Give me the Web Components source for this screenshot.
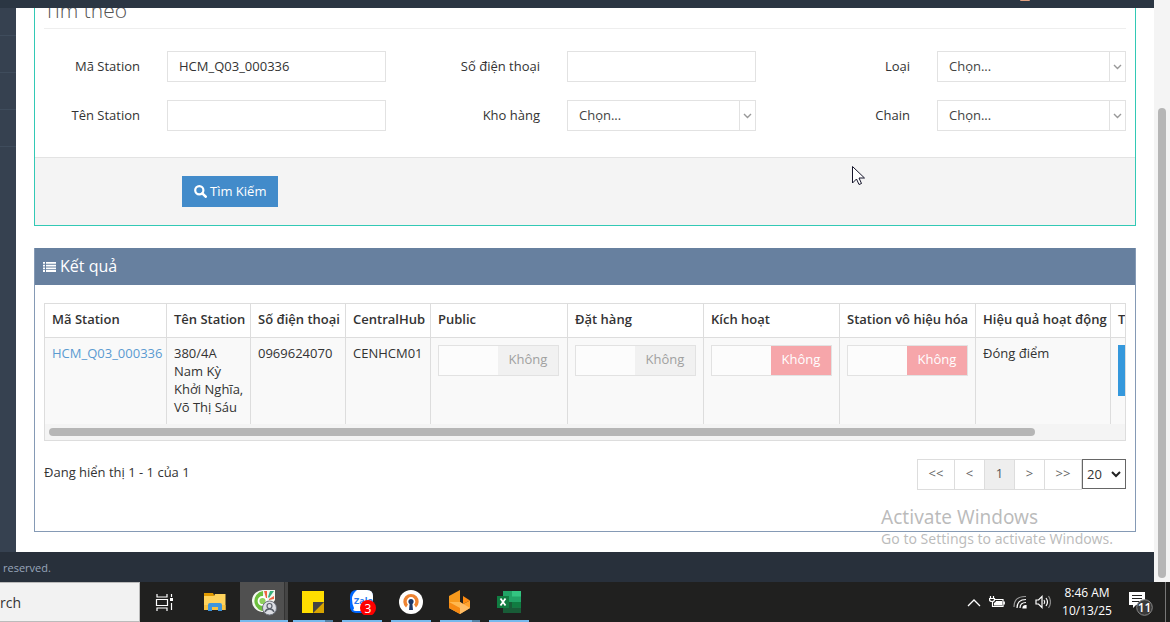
<!DOCTYPE html>
<html lang="vi">
<head>
<meta charset="utf-8">
<title>Station</title>
<style>
  html, body { height: 100%; }
  body {
    margin: 0;
    overflow: hidden;
    font: 13px/18px "Open Sans", "Noto Sans", sans-serif;
    color: #333;
  }
</style>
</head>
<body>
<station-app></station-app>

<script>
// Base: every element gives its markup and its styles
class BaseElement extends HTMLElement {

    constructor() {
        super();
        this.attachShadow({ mode: "open" });
    }

    connectedCallback() {
        if (this.shadowRoot.childNodes.length) return;
        let template = document.createElement("template");
        template.innerHTML = `
            <style>
            *, *::before, *::after { box-sizing: border-box; }
            button, input, select { font: inherit; color: inherit; border-radius: 0; margin: 0; }
            ${this.setStyles()}
            </style>
            ${this.getMarkup()}
        `;
        this.shadowRoot.appendChild(template.content.cloneNode(true));
    }
}

// Label + text box or drop-down, two cells of the filter grid
class FilterField extends BaseElement {

    getMarkup() {
        let label = this.getAttribute("label");
        let control = this.hasAttribute("options")
            ? `<div class="select">
                    <select id="control"><option>${this.getAttribute("options")}</option></select>
                    <span class="arrow"><svg width="9" height="6" viewBox="0 0 9 6"><path d="M1 1l3.5 3.5L8 1" fill="none" stroke="#999" stroke-width="1.4"/></svg></span>
                </div>`
            : `<input id="control" type="text" value="${this.getAttribute("value") || ""}">`;
        return `<label for="control">${label}</label>${control}`;
    }

    setStyles() {
        return `
        :host { display: contents; }
        label { text-align: right; padding: 6px 27px 0 0; }
        input, select {
            width: 100%;
            height: 31px;
            border: 1px solid #e2e2e2;
            background: #fff;
            padding: 0 11px 2px;
            outline: none;
        }
        select { appearance: none; color: #444; grid-area: 1 / 1 / 2 / 3; }
        .select { display: grid; grid-template-columns: 1fr 17px; }
        .arrow {
            grid-area: 1 / 2;
            display: flex;
            align-items: center;
            justify-content: center;
            padding-right: 1px;
            border-left: 1px solid #e2e2e2;
            pointer-events: none;
            z-index: 1;
        }`;
    }
}

class SearchPanel extends BaseElement {

    getMarkup() {
        return `
        <form onsubmit="return false">
            <div class="body">
                <div class="heading"><h3>Tìm theo</h3></div>
                <div class="fields"><slot></slot></div>
            </div>
            <div class="actions">
                <button type="submit">
                    <svg width="13" height="13" viewBox="0 0 13 13"><circle cx="5.3" cy="5.3" r="4.1" fill="none" stroke="#fff" stroke-width="2.2"/><path d="M8.3 8.3l3.4 3.4" stroke="#fff" stroke-width="2.6" stroke-linecap="round"/></svg>
                    <span>Tìm Kiếm</span>
                </button>
            </div>
        </form>`;
    }

    setStyles() {
        return `
        :host { display: block; border: 1px solid #32c9b5; border-top: 0; background: #fff; }
        form { margin: 0; }
        .body { padding: 0 9px 26px; }
        /* the heading is scrolled half under the top bar */
        .heading {
            display: flex;
            align-items: flex-end;
            height: 21px;
            overflow: hidden;
            border-bottom: 1px solid #eee;
        }
        h3 { margin: 0; font-weight: 300; font-size: 21px; line-height: 36px; color: #555; }
        .fields {
            display: grid;
            grid-template-columns: 123fr 219fr 181fr 189fr 181fr 189fr;
            row-gap: 18px;
            padding-top: 22px;
        }
        .actions {
            border-top: 1px solid #e3e3e3;
            background: #f4f4f4;
            padding: 18px 147px;
        }
        button {
            display: flex;
            align-items: center;
            gap: 3px;
            height: 31px;
            padding: 0 12px;
            border: 0;
            background: #428bca;
            color: #fff;
        }
        button span { padding-bottom: 2px; }`;
    }
}

class ResultPanel extends BaseElement {

    getMarkup() {
        return `
        <header>
            <svg width="13" height="10" viewBox="0 0 13 10" fill="#fff"><path d="M0 0h2v1.8H0zM3 0h10v1.8H3zM0 2.7h2v1.8H0zM3 2.7h10v1.8H3zM0 5.4h2v1.8H0zM3 5.4h10v1.8H3zM0 8.1h2v1.8H0zM3 8.1h10v1.8H3z"/></svg>
            <h4>Kết quả</h4>
        </header>
        <div class="body"><slot></slot></div>`;
    }

    setStyles() {
        return `
        :host { display: block; border: 1px solid #859ab5; border-top: 0; background: #fff; }
        header {
            display: flex;
            align-items: center;
            gap: 4px;
            height: 37px;
            padding-left: 8px;
            background: #67809f;
            color: #fff;
        }
        h4 { margin: 0; padding-bottom: 2px; font-size: 16px; font-weight: 400; }
        .body { padding: 18px 9px 41px; }`;
    }
}

class OnOffSwitch extends BaseElement {

    getMarkup() {
        return `
        <label>
            <input type="checkbox" disabled>
            <span class="off"><slot></slot></span>
        </label>`;
    }

    setStyles() {
        return `
        :host { display: block; --off-bg: #f1f1f1; --off-color: #a0a0a0; }
        :host([danger]) { --off-bg: #f6a6aa; --off-color: #fff; }
        label {
            display: flex;
            width: 121px;
            height: 31px;
            border: 1px solid #e2e2e2;
            background: #fcfcfc;
        }
        input { appearance: none; width: 59px; }
        .off {
            flex: 1;
            padding-top: 4px;
            text-align: center;
            background: var(--off-bg);
            color: var(--off-color);
        }`;
    }
}

class StationTable extends BaseElement {

    getMarkup() {
        return `
        <div class="scroller">
            <table>
                <colgroup>
                    <col style="width:122px"><col style="width:84px"><col style="width:95px">
                    <col style="width:85px"><col style="width:137px"><col style="width:136px">
                    <col style="width:136px"><col style="width:136px"><col style="width:135px">
                    <col style="width:100px">
                </colgroup>
                <thead>
                    <tr>
                        <th>Mã Station</th><th>Tên Station</th><th>Số điện thoại</th>
                        <th>CentralHub</th><th>Public</th><th>Đặt hàng</th><th>Kích hoạt</th>
                        <th>Station vô hiệu hóa</th><th>Hiệu quả hoạt động</th><th>T</th>
                    </tr>
                </thead>
                <tbody>
                    <tr>
                        <td><a href="#">HCM_Q03_000336</a></td>
                        <td class="wrap">380/4A Nam Kỳ Khởi Nghĩa, Võ Thị Sáu</td>
                        <td>0969624070</td>
                        <td>CENHCM01</td>
                        <td class="toggle"><on-off-switch>Không</on-off-switch></td>
                        <td class="toggle"><on-off-switch>Không</on-off-switch></td>
                        <td class="toggle"><on-off-switch danger>Không</on-off-switch></td>
                        <td class="toggle"><on-off-switch danger>Không</on-off-switch></td>
                        <td>Đóng điểm</td>
                        <td class="toggle"><button type="button" class="action"></button></td>
                    </tr>
                </tbody>
            </table>
        </div>
        <div class="scrollbar"><div class="thumb"></div></div>`;
    }

    setStyles() {
        return `
        :host { display: block; border: 1px solid #ddd; }
        .scroller { overflow: hidden; }
        table { table-layout: fixed; width: 1166px; min-width: 100%; border-collapse: separate; border-spacing: 0; }
        th, td {
            padding: 6px 7px 8px;
            border-right: 1px solid #ddd;
            text-align: left;
            vertical-align: top;
            white-space: nowrap;
        }
        th { font-weight: 600; padding-bottom: 9px; border-bottom: 1px solid #ddd; }
        td { background: #f9f9f9; }
        .toggle { padding-top: 7px; }
        .wrap { white-space: normal; padding-right: 2px; }
        a { color: #5b9bd1; text-decoration: none; }
        .action { display: block; width: 84px; height: 51px; border: 0; background: #3598dc; }
        .scrollbar { height: 16px; padding: 4px; background: #f4f4f4; }
        .thumb { width: 92%; height: 8px; border-radius: 4px; background: #b6b6b6; }`;
    }
}

class TablePager extends BaseElement {

    getMarkup() {
        return `
        <span class="info">Đang hiển thị 1 - 1 của 1</span>
        <nav>
            <button type="button" class="wide">&lt;&lt;</button>
            <button type="button">&lt;</button>
            <button type="button" class="current">1</button>
            <button type="button">&gt;</button>
            <button type="button" class="wide">&gt;&gt;</button>
        </nav>
        <div class="size">
            <select aria-label="Số dòng"><option>20</option></select>
            <svg width="10" height="7" viewBox="0 0 10 7"><path d="M1 1l4 4 4-4" fill="none" stroke="#222" stroke-width="2"/></svg>
        </div>`;
    }

    setStyles() {
        return `
        :host { display: flex; margin-top: 18px; }
        .info { flex: 1; padding-top: 4px; }
        nav { display: flex; border-left: 1px solid #ddd; }
        button {
            width: 30px;
            height: 31px;
            padding: 0 0 3px;
            border: 1px solid #ddd;
            border-left: 0;
            background: #fff;
            color: #666;
        }
        .wide { width: 37px; }
        .current { background: #eee; color: #555; }
        .size { display: grid; grid-template-columns: 29px 15px; align-items: center; }
        select {
            grid-area: 1 / 1 / 2 / 3;
            appearance: none;
            align-self: start;
            height: 30px;
            padding: 0 4px;
            border: 1px solid #666;
            background: #fff;
        }
        svg { grid-area: 1 / 2; z-index: 1; pointer-events: none; }`;
    }
}

class TaskBar extends BaseElement {

    getMarkup() {
        return `
        <input type="text" value="rch" aria-label="Search">
        <div class="apps">
            <button type="button" aria-label="Task View">
                <svg width="24" height="24" viewBox="0 0 24 24" fill="none" stroke="#fff" stroke-width="1.2"><path d="M3 4v3h10V4M2.500 9.500h11v6h-11zM3 21v-3h10v3M17.500 4v3M17.500 13v7"/><path d="M16 8h3v3h-3z" fill="#fff" stroke="none"/></svg>
            </button>
            <button type="button" aria-label="File Explorer">
                <svg width="24" height="24" viewBox="0 0 24 24"><path d="M1 3h9l1 2v4H1z" fill="#e19a00"/><path d="M1 6h10l1-2h10.500v16H1z" fill="#ffd35c"/><path d="M1 15h21.500v5H1z" fill="#f7c13f"/><path d="M5 21v-6q0-2 2-2h10q2 0 2 2v6h-4v-4H9v4z" fill="#3e95dc"/></svg>
            </button>
            <button type="button" class="open active" aria-label="Cốc Cốc">
                <svg width="28" height="28" viewBox="0 0 28 28"><path d="M14 2h11v10l-3 4-6 8h-4A11 11 0 0 1 14 2z" fill="#f4f7f0"/><path d="M13 3A10 10 0 1 0 16 23L20 14h-4.500L13 9z" fill="#6cbf3d"/><circle cx="12.500" cy="13" r="4" fill="#8fd05c" stroke="#fff" stroke-width="1.800"/><path d="M14 3l3 0 0 7-1 0z" fill="#ef6340"/><path d="M20 3h4l-5 7-1-1z" fill="#38b07c"/><path d="M24 8v3l-5 1v-1z" fill="#ef6340"/><circle cx="19.500" cy="20" r="7" fill="#dcdee4" stroke="#6c727c"/><circle cx="19.500" cy="18" r="2.500" fill="none" stroke="#5c626c" stroke-width="1.200"/><path d="M15 24q1-3 4.500-3t4.500 3" fill="none" stroke="#5c626c" stroke-width="1.400"/></svg>
            </button>
            <button type="button" class="open stacked" aria-label="Sticky Notes">
                <svg width="22" height="22" viewBox="0 0 22 22"><path d="M0 0h22v11L11 22H0z" fill="#fd0"/><path d="M22 11v11H11z" fill="#d8a400"/><path d="M11 11h11L11 22z" fill="#444"/></svg>
            </button>
            <button type="button" class="open" aria-label="Zalo">
                <svg width="28" height="26" viewBox="0 0 28 26"><rect x="2" y="1" width="23" height="23" rx="6" fill="#0068ff"/><path d="M9 1h10q6 0 6 6v9q0 6-6 6H8q-2 0-3-1 1-1 1-2-2-4-2-9t5-9z" fill="#fff"/><text x="6" y="15" font-size="9" font-weight="700" fill="#2878f0">Zalo</text><circle cx="20" cy="19" r="8" fill="#f00"/><text x="20" y="23.500" font-size="12" text-anchor="middle" fill="#fff">3</text></svg>
            </button>
            <button type="button" class="open" aria-label="OpenVPN">
                <svg width="24" height="24" viewBox="0 0 24 24"><circle cx="12" cy="12" r="12" fill="#fff"/><path d="M7 17.500A7.700 7.700 0 1 1 17 17.500L15 14.500A4.300 4.300 0 1 0 9 14.500z" fill="#ee8433"/><circle cx="12" cy="11.500" r="2.600" fill="#1b3768"/><path d="M10.800 12h2.400l.8 8h-4z" fill="#1b3768"/></svg>
            </button>
            <button type="button" class="open stacked" aria-label="Hive">
                <svg width="22" height="24" viewBox="0 0 22 24"><path d="M11 0v12L0 18V6z" fill="#f79a1d"/><path d="M0 12l11 0v12L0 18z" fill="#ffb84f"/><path d="M0 12l11 6v6L0 18z" fill="#f68a13"/><path d="M14 6l7 4.500-7 3.500z" fill="#ff8b10"/><path d="M14 14l7-3.500V18l-10 6V12z" fill="#ffa12c"/><path d="M11 12l10 6-10 6z" fill="#ffbd66"/></svg>
            </button>
            <button type="button" class="open" aria-label="Excel">
                <svg width="24" height="22" viewBox="0 0 24 22"><path d="M6 0h18v22H6z" fill="#21a366"/><path d="M15 0h9v5.500h-9z" fill="#33c481"/><path d="M6 11h9v11H6z" fill="#185c37"/><path d="M15 11h9v5.500h-9z" fill="#107c41"/><path d="M15 16.500h9V22h-9z" fill="#185c37"/><path d="M0 5h12v12H0z" fill="#107c41"/><path d="M3.500 7.500l5 7M8.500 7.500l-5 7" stroke="#fff" stroke-width="1.800"/></svg>
            </button>
        </div>
        <div class="tray">
            <svg width="14" height="9" viewBox="0 0 14 9" fill="none" stroke="#fff" stroke-width="1.300"><path d="M1 8l6-6 6 6"/></svg>
            <svg width="16" height="13" viewBox="0 0 16 13" fill="none" stroke="#fff" stroke-width="1.200"><path d="M6 3.500h8v7H3.500V6M1.500 0v2.500M4.500 0v2.500M.5 2.500h5v1q0 2-2.500 2T.5 3.500zM15.300 5.500v3"/><path d="M7 5h6v4.500H5V7q2-1 2-2z" fill="#fff" stroke="none"/></svg>
            <svg width="14" height="14" viewBox="0 0 14 14" fill="none" stroke="#fff" stroke-width="1.200"><path d="M1 12Q1 1 13 1.500" stroke="#999"/><path d="M4 13Q4 4.500 13 4.500M7 13Q7 7.500 13 7.500"/><path d="M10 13q0-2.500 3-2.500V13z" fill="#fff"/></svg>
            <svg width="16" height="14" viewBox="0 0 16 14" fill="none" stroke="#fff" stroke-width="1.200"><path d="M1 5h2.500L7 1.500v11L3.500 9H1z"/><path d="M9 5q1.500 2 0 4M11 3q3 4 0 8"/><path d="M13.500 1q4 6 0 12" stroke="#888"/></svg>
            <time><span>8:46 AM</span><span>10/13/25</span></time>
            <svg class="notice" width="26" height="26" viewBox="0 0 26 26"><path d="M1 2h16v13H8l-3 3v-3H1z" fill="#fff"/><path d="M4 5.500h10M4 8.500h10M4 11.500h7" stroke="#222"/><circle cx="16.500" cy="17.500" r="7.800" fill="#3a3a3a" stroke="#888"/><text x="16.500" y="22" font-size="12" font-weight="600" text-anchor="middle" fill="#fff">11</text></svg>
        </div>`;
    }

    setStyles() {
        return `
        :host { display: flex; height: 40px; background: #20201f; color: #fff; }
        input {
            width: 140px;
            padding: 2px 0 0;
            border: 1px solid #bbb;
            border-left: 0;
            background: #f2f2f2;
            color: #333;
            font-size: 14px;
            outline: none;
        }
        .apps { display: flex; flex: 1; padding-left: 2px; }
        button {
            display: flex;
            align-items: center;
            justify-content: center;
            width: 49px;
            padding: 0 5px 0 3px;
            border: 0;
            background: none;
        }
        .open { background: linear-gradient(#76b9ed, #76b9ed) 4px 100% / 40px 2px no-repeat; }
        .stacked {
            background: linear-gradient(90deg, #76b9ed 32px, #5583a6 32px) 4px 100% / 40px 2px no-repeat;
        }
        .active {
            background: linear-gradient(#76b9ed, #76b9ed) 0 100% / 48px 2px no-repeat, linear-gradient(90deg, #505050 44px, #333 44px, #333 45px, #454545 45px, #454545 48px, #20201f 48px);
        }
        .tray { display: flex; align-items: center; gap: 8px; padding-right: 4px; border-right: 1px solid #777; margin-right: 4px; }
        time {
            display: flex;
            flex-direction: column;
            align-items: center;
            width: 56px;
            font-size: 12px;
            white-space: nowrap;
        }
        .notice { margin: 2px 7px 0 5px; }`;
    }
}

class StationApp extends BaseElement {

    getMarkup() {
        return `
        <div class="window">
            <div class="page">
                <div class="topbar"><span class="avatar"></span></div>
                <div class="middle">
                    <aside><i></i><i></i><i></i><i></i></aside>
                    <main>
                        <search-panel>
                            <filter-field label="Mã Station" value="HCM_Q03_000336"></filter-field>
                            <filter-field label="Số điện thoại"></filter-field>
                            <filter-field label="Loại" options="Chọn..."></filter-field>
                            <filter-field label="Tên Station"></filter-field>
                            <filter-field label="Kho hàng" options="Chọn..."></filter-field>
                            <filter-field label="Chain" options="Chọn..."></filter-field>
                        </search-panel>
                        <result-panel>
                            <station-table></station-table>
                            <table-pager></table-pager>
                        </result-panel>
                    </main>
                </div>
                <footer>reserved.</footer>
            </div>
            <div class="scrollbar"><div class="thumb"></div></div>
        </div>
        <task-bar></task-bar>
        <div class="watermark"><div class="big">Activate Windows</div><div>Go to Settings to activate Windows.</div></div>
        <svg class="cursor" width="13" height="20" viewBox="0 0 13 20"><path d="M.5.5v16.500l4-4 2.500 5.500 2.500-1-2.500-5.500h5.500z" fill="#fff" stroke="#15152a"/></svg>`;
    }

    setStyles() {
        return `
        :host { display: flex; flex-direction: column; height: 100vh; position: relative; }
        .window { flex: 1; display: flex; min-height: 0; }
        .page { flex: 1; display: flex; flex-direction: column; min-width: 0; }
        .topbar { display: flex; justify-content: flex-end; height: 8px; padding-right: 124px; background: #2b3643; }
        .avatar { width: 10px; height: 1px; background: #e0a080; border-radius: 0 0 4px 4px; }
        .middle { flex: 1; display: flex; min-height: 0; }
        aside { width: 16px; background: #364150; }
        aside i { display: block; height: 37px; border-bottom: 1px solid #3f4c5c; }
        aside i:first-child { height: 28px; }
        main {
            flex: 1;
            min-width: 0;
            display: flex;
            flex-direction: column;
            gap: 22px;
            padding: 0 18px;
            background: #fff;
            overflow: hidden;
        }
        footer { height: 30px; padding: 7px 3px; background: #28303b; color: #98a6ba; font-size: 11px; }
        .scrollbar { width: 16px; padding: 108px 4px 4px; background: #f4f4f4; }
        .thumb { height: 100%; border-radius: 4px; background: #b6b6b6; }
        .watermark {
            position: absolute;
            right: 57px;
            bottom: 72px;
            font-family: "Noto Sans", sans-serif;
            font-size: 14px;
            line-height: 22px;
            color: rgba(120, 120, 120, .5);
            pointer-events: none;
        }
        .big { font-size: 19px; }
        .cursor { position: absolute; left: 852px; top: 166px; pointer-events: none; }`;
    }
}

customElements.define("filter-field", FilterField);
customElements.define("search-panel", SearchPanel);
customElements.define("result-panel", ResultPanel);
customElements.define("on-off-switch", OnOffSwitch);
customElements.define("station-table", StationTable);
customElements.define("table-pager", TablePager);
customElements.define("task-bar", TaskBar);
customElements.define("station-app", StationApp);
</script>
</body>
</html>
